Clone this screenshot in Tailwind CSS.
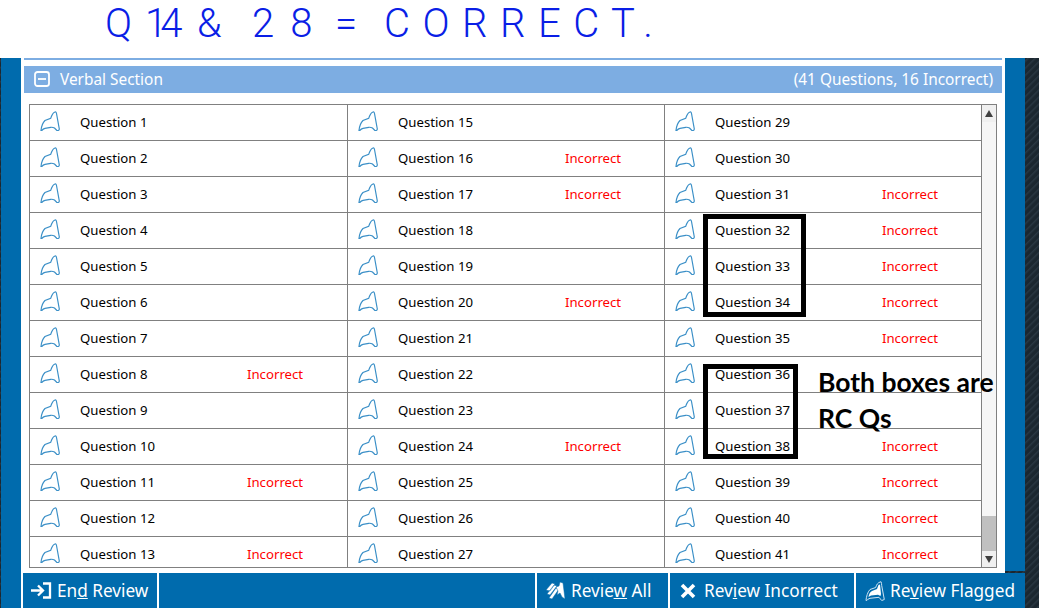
<!DOCTYPE html>
<html lang="en">
<head>
  <meta charset="UTF-8" />
  <title>Verbal Section Review</title>
  <script src="https://cdn.jsdelivr.net/npm/@tailwindcss/browser@4"></script>
</head>
<body class="bg-[#1c2830]">
  <div class="relative flex w-[1039px] h-[608px] flex-col overflow-hidden font-['Noto_Sans',sans-serif] bg-[repeating-linear-gradient(135deg,#1b2730_0px,#1b2730_2px,#2a3843_3px,#1b2730_5px)]">

    <!-- handwritten note on top of the screenshot -->
    <div class="flex h-[58px] shrink-0 items-start bg-white pl-[105px] font-['Roboto',sans-serif] font-light text-[40px] leading-[47px] text-[#0a1ee6]">
      <span class="w-[40px]">Q</span>
      <span class="w-[52px] tracking-[-7px]">14</span>
      <span class="w-[55px]">&amp;</span>
      <span class="w-[83px] tracking-[16px]">28</span>
      <span class="w-[49px]">=</span>
      <span class="tracking-[12.500px]">CORRECT.</span>
    </div>

    <div class="flex min-h-0 flex-1 pl-px">
      <div class="w-[20px] shrink-0 bg-[#006bad]"></div>

      <div class="flex w-[1004px] shrink-0 flex-col">
        <div class="flex h-[515px] shrink-0">
          <main class="w-[984px] bg-white px-[3px]">
            <div class="h-[2px] bg-[#7dade2]"></div>
            <div class="mt-[6px] flex h-[27px] items-center justify-between bg-[#7dade2] pl-[10px] pr-[9px] text-[15.400px] text-white">
              <div class="flex items-center gap-[10px]">
                <svg width="16" height="16" viewBox="0 0 16 16" fill="none" stroke="white" stroke-width="1.8"><rect x="1" y="1" width="14" height="14" rx="2.500"/><path d="M4 8h8"/></svg>
                <span>Verbal Section</span>
              </div>
              <span>(41 Questions, 16 Incorrect)</span>
            </div>

            <div class="mx-[5px] mt-[11px] flex h-[464px] overflow-hidden border border-[#808080]">
              <div id="grid" class="grid min-w-0 flex-1 grid-flow-col grid-cols-[318px_317px_317px] grid-rows-[repeat(13,36px)]"></div>
              <div class="flex w-[15px] shrink-0 flex-col border-l border-[#808080] bg-[#f6f6f6]">
                <div class="flex h-[17px] items-center justify-center bg-[#f0f0f0]">
                  <div class="h-0 w-0 border-x-[4px] border-b-[7px] border-x-transparent border-b-[#404040]"></div>
                </div>
                <div class="flex-1"></div>
                <div class="h-[35px] bg-[#c0c0c0]"></div>
                <div class="flex h-[16px] items-center justify-center bg-[#f0f0f0]">
                  <div class="h-0 w-0 border-x-[4px] border-t-[7px] border-x-transparent border-t-[#404040]"></div>
                </div>
              </div>
            </div>
          </main>
          <div class="h-[513px] w-[20px] bg-[#006bad]"></div>
        </div>

        <!-- bottom toolbar -->
        <div class="flex h-[35px] shrink-0 gap-[2px] bg-white pl-[2px] text-[17.200px] text-white">
          <div class="flex w-[134px] items-center gap-[5px] bg-[#006bad] pl-[8px]">
            <svg width="21" height="17" viewBox="0 0 21 17" fill="none" stroke="white" stroke-width="2.300"><path d="M12 1.500h7v14h-7"/><path d="M0 8.500h11M7 3.500l5 5-5 5"/></svg>
            <span>En<u>d</u> Review</span>
          </div>
          <div class="w-[376px] bg-[#006bad]"></div>
          <div class="flex w-[131px] items-center gap-[5px] bg-[#006bad] pl-[9px]">
            <svg width="20" height="20" viewBox="0 0 20 20" fill="white" stroke="#006bad" stroke-width=".5"><path d="M0 9 6 2l3 1-5 7zM1 13l7-9 3 1-7 9zM3 17l7-10 3 1-7 10z"/><path d="M10 6l3-1 1-4 3 1 2 16-3-2-2-4-3 2 1-4z"/></svg>
            <span>Revie<u>w</u> All</span>
          </div>
          <div class="flex w-[184px] items-center gap-[8px] bg-[#006bad] pl-[10px]">
            <svg width="16" height="16" viewBox="0 0 16 16" fill="none" stroke="white" stroke-width="3.600"><path d="M2 2l12 12M14 2 2 14"/></svg>
            <span>Rev<u>i</u>ew Incorrect</span>
          </div>
          <div class="flex w-[169px] items-center gap-[5px] bg-[#006bad] pl-[9px]">
            <svg width="20" height="20" viewBox="0 0 20 20"><path d="M1 19.500C1.300 16 2.500 11 5 8.500L10.700 6.500C11.500 4 12.500 1.500 16 .7C16.500 1.500 16.600 3 16.700 4.500L19.300 18.500L16.700 19.500L14 16.300L5 17.300C3.500 17.600 2.500 18.500 1.700 19.600Z" fill="none" stroke="#cfe3f2" stroke-width="1"/><path d="M3.500 16C4 13 5 11 7 10L12 8L13.500 4L15 3.500L16 13L15.500 15L13 13.800L6 14.600Z" fill="white"/></svg>
            <span>Re<u>v</u>iew Flagged</span>
          </div>
        </div>
      </div>
    </div>

    <!-- marker boxes and note drawn over the list -->
    <div class="absolute left-[703px] top-[214px] h-[103px] w-[103px] border-[5px] border-black"></div>
    <div class="absolute left-[703px] top-[364px] h-[95px] w-[95px] border-[5px] border-black"></div>
    <div class="absolute left-[818px] top-[364px] font-['Lato',sans-serif] font-bold text-[26.500px] leading-[36px] text-black">Both boxes are<br>RC Qs</div>
  </div>

  <script>
    const incorrect = [8, 11, 13, 16, 17, 20, 24, 31, 32, 33, 34, 35, 38, 39, 40, 41];
    // 14 and 28 are not in the list
    const columns = [[1, 13], [15, 27], [29, 41]];
    const flag = `<svg class="mb-[3px] ml-[10px] shrink-0" width="20" height="20" viewBox="0 0 20 20" fill="none" stroke="#3a8fc7" stroke-width="1.200"><path d="M1 19.500C1.300 16.500 2.500 12 5 9.500L10.700 7.300C11.500 5 12.500 2 14.500 1.200C15.500 .6 16.200 1 16.500 2.500L19.300 18C19.300 19.600 17.500 19.900 16.700 19.200L14.500 17C13 16.200 12 16.200 10.700 16.300L5 17.300C3.500 17.600 2.500 18.500 1.700 19.600Z"/></svg>`;

    const grid = document.getElementById("grid");
    columns.forEach(([from, to], c) => {
      for (let n = from; n <= to; n++) {
        const mark = incorrect.includes(n) ? "Incorrect" : "";
        const side = c < 2 ? "border-r border-[#808080]" : "";
        grid.innerHTML += `<div class="flex items-center border-b border-[#808080] text-[13.200px] text-black ${side}">
          ${flag}
          <span class="ml-[20px] w-[167px] shrink-0">Question ${n}</span>
          <span class="text-[#ff0000]">${mark}</span>
        </div>`;
      }
    });
  </script>
</body>
</html>
